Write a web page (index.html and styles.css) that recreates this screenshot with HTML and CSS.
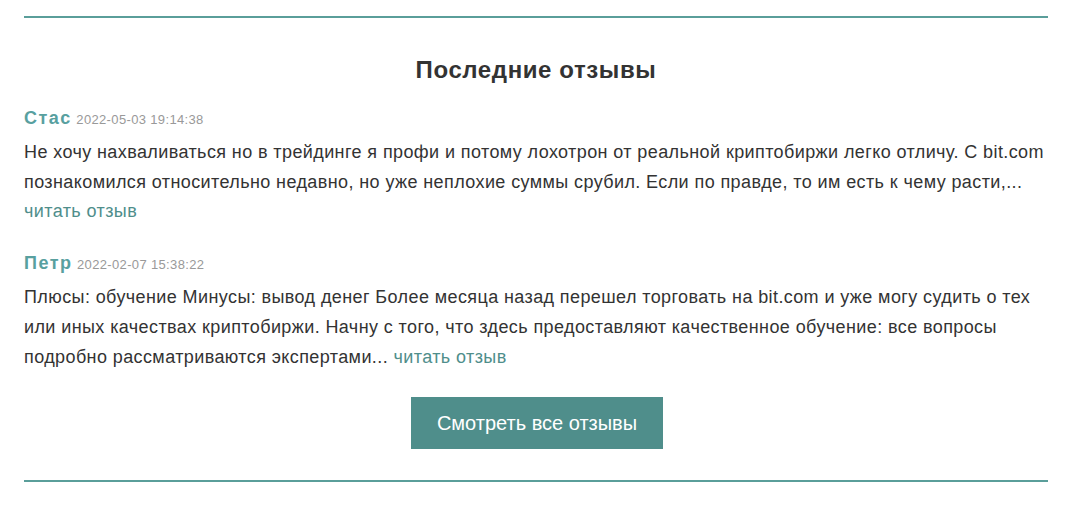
FILE: index.html
```html
<!DOCTYPE html>
<html lang="ru">
<head>
<meta charset="utf-8">
<link rel="stylesheet" href="styles.css">
</head>
<body>
<section class="reviews">
  <h2 class="title">Последние отзывы</h2>
  <div class="review">
    <div class="meta"><span class="name">Стас</span> <span class="date">2022-05-03 19:14:38</span></div>
    <p class="text">Не хочу нахваливаться но в трейдинге я профи и потому лохотрон от реальной криптобиржи легко отличу. С bit.com познакомился относительно недавно, но уже неплохие суммы срубил. Если по правде, то им есть к чему расти,... <a class="more" href="#">читать отзыв</a></p>
  </div>
  <div class="review">
    <div class="meta"><span class="name">Петр</span> <span class="date">2022-02-07 15:38:22</span></div>
    <p class="text">Плюсы: обучение Минусы: вывод денег Более месяца назад перешел торговать на bit.com и уже могу судить о тех или иных качествах криптобиржи. Начну с того, что здесь предоставляют качественное обучение: все вопросы подробно рассматриваются экспертами... <a class="more" href="#">читать отзыв</a></p>
  </div>
  <div class="actions">
    <a class="btn" href="#">Смотреть все отзывы</a>
  </div>
</section>
</body>
</html>
```
FILE: styles.css
```css
body {
  margin: 0;
  background: #fff;
  font-family: "Liberation Sans", Arial, sans-serif;
  color: #333;
}
.reviews {
  margin: 16px 23px 0 24px;
  border-top: 2px solid #5a9e9a;
  border-bottom: 2px solid #5a9e9a;
  padding: 38px 0 31px;
}
.title {
  margin: 0 0 22px;
  text-align: center;
  font-size: 24px;
  font-weight: bold;
  line-height: 28px;
  letter-spacing: 0.6px;
  color: #333;
}
.review {
  margin-bottom: 24px;
}
.meta {
  line-height: 24px;
  margin-bottom: 6px;
}
.name {
  font-size: 18px;
  font-weight: bold;
  color: #58a09f;
  letter-spacing: 1.5px;
}
.date {
  font-size: 13px;
  color: #999;
  letter-spacing: 0.35px;
}
.text {
  margin: 0;
  font-size: 18px;
  line-height: 29.7px;
  letter-spacing: 0.4px;
  color: #333;
}
.more {
  color: #4f8e8b;
  text-decoration: none;
}
.actions {
  display: flex;
  justify-content: center;
  padding: 1px 0 0 2px;
}
.btn {
  display: block;
  width: 252px;
  height: 52px;
  line-height: 52px;
  text-align: center;
  background: #4f8e8b;
  color: #fff;
  font-size: 20px;
  text-decoration: none;
}
```
